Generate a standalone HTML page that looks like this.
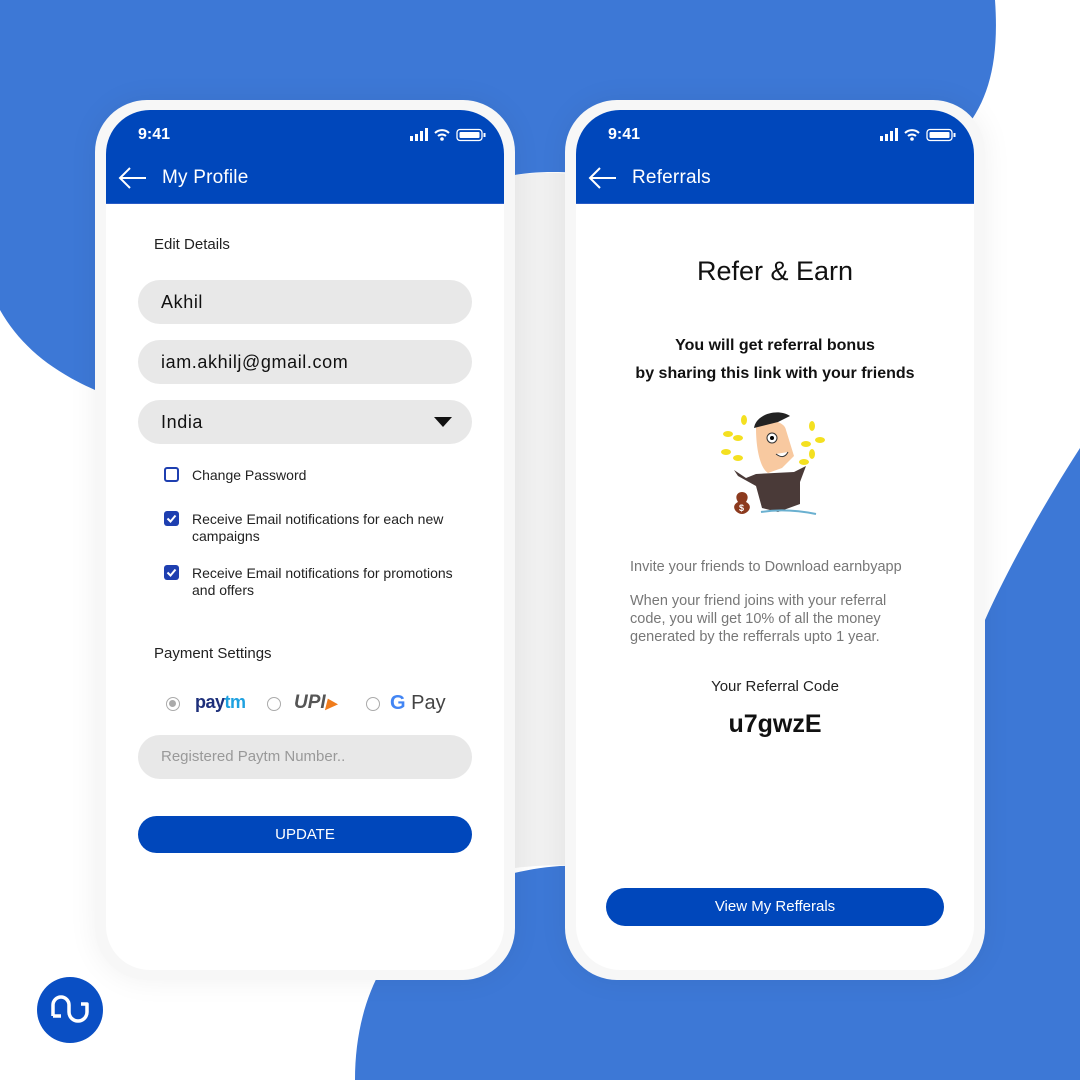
<!DOCTYPE html>
<html><head><meta charset="utf-8">
<style>
*{margin:0;padding:0;box-sizing:border-box}
body{width:1080px;height:1080px;position:relative;overflow:hidden;background:#fff;font-family:"Liberation Sans",sans-serif}
.bg{position:absolute;left:0;top:0}
.phone{position:absolute;top:100px;width:420px;height:880px;border-radius:52px;background:#f7f7f7;box-shadow:0 0 30px rgba(0,0,0,0.06)}
.screen{position:absolute;left:11px;top:10px;width:398px;height:860px;border-radius:44px;background:#fff;overflow:hidden}
.hdr{height:94px;background:#0047bb;color:#fff;position:relative;border-bottom:1px solid #2a5cc6}
.time{position:absolute;left:32px;top:16px;font-size:16px;font-weight:bold}
.icons{position:absolute;right:16px;top:18px}
.title{position:absolute;left:56px;top:57px;font-size:19px;letter-spacing:0.2px}
.arrow{position:absolute;left:12px;top:56px}
.field{position:absolute;left:32px;width:334px;height:44px;border-radius:22px;background:#e8e8e8;font-size:18px;line-height:44px;padding-left:23px;color:#111;letter-spacing:0.6px}
.cb{position:absolute;left:58px;width:15px;height:15px;border-radius:3px}
.cb.off{border:2px solid #1e3fb0}
.cb.on{background:#1e3fb0}
.lbl{position:absolute;left:86px;font-size:14px;color:#222;line-height:17px}
.btn{position:absolute;background:#0047bb;color:#fff;text-align:center;border-radius:19px;font-size:15px}
.radio{position:absolute;width:14px;height:14px;border-radius:50%;border:1.5px solid #aaa}
.c{position:absolute;left:0;width:398px;text-align:center}
</style></head><body>
<svg class="bg" width="1080" height="1080">
<path d="M0 0H995C1000 70 985 110 955 140 L600 175 C560 170 530 172 515 175 L100 240 C98 290 97 340 95 390 C50 370 20 345 0 310Z" fill="#3d78d6"/>
<path d="M515 175 C540 172 560 172 575 175 L575 865 C550 865 530 866 515 868Z" fill="#f0f0f0"/>
<path d="M1080 448 C1040 510 1005 575 985 620 L985 860 L560 866 C440 875 355 950 355 1080 H1080Z" fill="#3d78d6"/>
<circle cx="70" cy="1010" r="33" fill="#0a4fc4"/>
<path d="M54 1016 V1005 a8 8 0 0 1 16 0 V1012 a9 9 0 0 0 18 0 V1004 H82" fill="none" stroke="#fff" stroke-width="3.5" stroke-linejoin="round" transform="translate(-1,0)"/>
<path d="M54 1016 H62" stroke="#fff" stroke-width="3.5" transform="translate(-1,0)"/>
</svg>

<!-- Phone 1 -->
<div class="phone" style="left:95px"><div class="screen">
<div class="hdr">
<div class="time">9:41</div>
<svg class="icons" width="78" height="14"><rect x="0" y="8" width="3" height="5" fill="#fff"/><rect x="5" y="6" width="3" height="7" fill="#fff"/><rect x="10" y="3" width="3" height="10" fill="#fff"/><rect x="15" y="0" width="3" height="13" fill="#fff"/>
<path d="M25 5 a10 10 0 0 1 14 0 M28 8 a6 6 0 0 1 8 0" stroke="#fff" stroke-width="2" fill="none"/><circle cx="32" cy="11" r="1.8" fill="#fff"/>
<rect x="47" y="1.5" width="25" height="11" rx="3" fill="none" stroke="#fff" stroke-width="1.3"/><rect x="49.5" y="4" width="20" height="6" rx="1" fill="#fff"/><rect x="73.5" y="5" width="2" height="4" fill="#fff"/></svg>
<svg class="arrow" width="30" height="24"><path d="M28 12H3 M12 2 L2 12 L12 22" stroke="#fff" stroke-width="2" fill="none"/></svg>
<div class="title">My Profile</div>
</div>
<div style="position:absolute;left:48px;top:126px;font-size:15px;color:#222">Edit Details</div>
<div class="field" style="top:170px">Akhil</div>
<div class="field" style="top:230px">iam.akhilj@gmail.com</div>
<div class="field" style="top:290px">India<svg style="position:absolute;right:20px;top:17px" width="18" height="10"><path d="M0 0H18L9 10Z" fill="#111"/></svg></div>
<div class="cb off" style="top:357px"></div><div class="lbl" style="top:357px">Change Password</div>
<div class="cb on" style="top:401px"><svg width="15" height="15"><path d="M3.5 7.5 L6.5 10.5 L11.5 4.5" stroke="#fff" stroke-width="2" fill="none"/></svg></div>
<div class="lbl" style="top:401px">Receive Email notifications for each new<br>campaigns</div>
<div class="cb on" style="top:455px"><svg width="15" height="15"><path d="M3.5 7.5 L6.5 10.5 L11.5 4.5" stroke="#fff" stroke-width="2" fill="none"/></svg></div>
<div class="lbl" style="top:455px">Receive Email notifications for promotions<br>and offers</div>
<div style="position:absolute;left:48px;top:535px;font-size:15px;color:#222">Payment Settings</div>
<div class="radio" style="left:60px;top:587px"><div style="width:7px;height:7px;border-radius:50%;background:#aaa;margin:2px"></div></div>
<div style="position:absolute;left:89px;top:582px;font-size:18px;font-weight:bold;color:#1d2f7a;letter-spacing:-0.5px">pay<span style="color:#1ea1e0">tm</span></div>
<div class="radio" style="left:161px;top:587px"></div>
<div style="position:absolute;left:188px;top:582px;font-size:19px;font-style:italic;font-weight:bold;color:#555">UPI<span style="color:#f07c1c;font-size:14px">▶</span></div>
<div class="radio" style="left:260px;top:587px"></div>
<div style="position:absolute;left:284px;top:582px;font-size:20px;color:#444"><b style="color:#4285f4">G</b> Pay</div>
<div class="field" style="top:625px;font-size:15px;color:#999;letter-spacing:0">Registered Paytm Number..</div>
<div class="btn" style="left:32px;top:706px;width:334px;height:37px;line-height:37px;font-size:15px">UPDATE</div>
</div></div>

<!-- Phone 2 -->
<div class="phone" style="left:565px"><div class="screen">
<div class="hdr">
<div class="time">9:41</div>
<svg class="icons" width="78" height="14"><rect x="0" y="8" width="3" height="5" fill="#fff"/><rect x="5" y="6" width="3" height="7" fill="#fff"/><rect x="10" y="3" width="3" height="10" fill="#fff"/><rect x="15" y="0" width="3" height="13" fill="#fff"/>
<path d="M25 5 a10 10 0 0 1 14 0 M28 8 a6 6 0 0 1 8 0" stroke="#fff" stroke-width="2" fill="none"/><circle cx="32" cy="11" r="1.8" fill="#fff"/>
<rect x="47" y="1.5" width="25" height="11" rx="3" fill="none" stroke="#fff" stroke-width="1.3"/><rect x="49.5" y="4" width="20" height="6" rx="1" fill="#fff"/><rect x="73.5" y="5" width="2" height="4" fill="#fff"/></svg>
<svg class="arrow" width="30" height="24"><path d="M28 12H3 M12 2 L2 12 L12 22" stroke="#fff" stroke-width="2" fill="none"/></svg>
<div class="title">Referrals</div>
</div>
<div class="c" style="top:146px;font-size:27px;color:#111">Refer &amp; Earn</div>
<div class="c" style="top:222px;font-size:16px;color:#111;line-height:28px;font-weight:bold">You will get referral bonus<br>by sharing this link with your friends</div>
<svg style="position:absolute;left:140px;top:298px" width="120" height="110">
<g fill="#f4e020"><ellipse cx="12" cy="26" rx="5" ry="3"/><ellipse cx="22" cy="30" rx="5" ry="3"/><ellipse cx="10" cy="44" rx="5" ry="3"/><ellipse cx="22" cy="50" rx="5" ry="3"/><ellipse cx="28" cy="12" rx="3" ry="5"/><ellipse cx="96" cy="18" rx="3" ry="5"/><ellipse cx="104" cy="32" rx="5" ry="3"/><ellipse cx="90" cy="36" rx="5" ry="3"/><ellipse cx="96" cy="46" rx="3" ry="5"/><ellipse cx="88" cy="54" rx="5" ry="3"/></g>
<path d="M18 62 L30 70 L40 66 L78 64 L90 58 L84 74 L84 96 L62 104 L46 100 L40 78 L22 68Z" fill="#4a3a38"/>
<path d="M40 20 C40 10 68 10 70 22 L78 48 L66 60 L52 65 C44 60 40 40 40 20Z" fill="#f8c9a0"/>
<path d="M38 20 C40 6 62 0 74 8 L62 14 Z" fill="#222"/>
<circle cx="56" cy="30" r="5" fill="#fff" stroke="#333"/><circle cx="56" cy="30" r="2" fill="#000"/>
<path d="M60 46 Q68 52 72 44" stroke="#333" fill="#fff"/>
<path d="M22 94 C18 88 22 84 26 84 C30 84 34 88 30 94 C38 98 32 106 26 106 C20 106 14 98 22 94Z" fill="#8c3a1e"/>
<text x="23" y="103" font-size="9" fill="#fff" font-weight="bold" font-family="Liberation Sans">$</text>
<path d="M45 104 Q70 100 100 106" stroke="#6ab0d0" stroke-width="2" fill="none"/>
</svg>
<div style="position:absolute;left:54px;top:449px;font-size:14.5px;color:#777">Invite your friends to Download earnbyapp</div>
<div style="position:absolute;left:54px;top:482px;font-size:14.5px;color:#777;line-height:18px">When your friend joins with your referral<br>code, you will get 10% of all the money<br>generated by the refferrals upto 1 year.</div>
<div class="c" style="top:568px;font-size:15px;color:#222">Your Referral Code</div>
<div class="c" style="top:600px;font-size:25px;color:#111;font-weight:bold">u7gwzE</div>
<div class="btn" style="left:30px;top:778px;width:338px;height:38px;line-height:38px">View My Refferals</div>
</div></div>
</body></html>
